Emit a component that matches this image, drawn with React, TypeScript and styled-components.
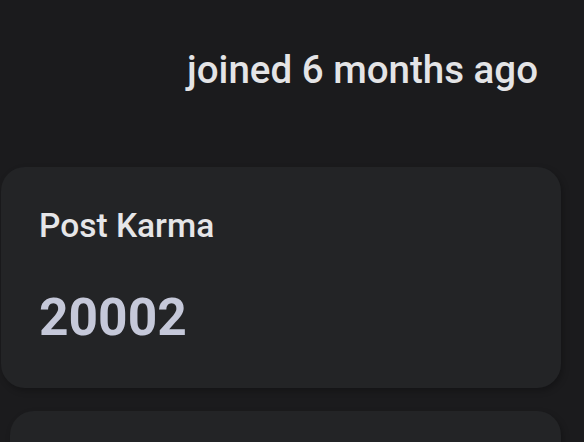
import styled, { createGlobalStyle } from 'styled-components';

const GlobalStyle = createGlobalStyle`
  html, body {
    margin: 0;
    padding: 0;
    background: #1b1b1d;
    font-family: Roboto, "Liberation Sans", sans-serif;
  }
`;

const Page = styled.div`
  width: 584px;
  height: 442px;
  overflow: hidden;
  display: flex;
  flex-direction: column;
  background: #1b1b1d;
`;

const JoinedRow = styled.div`
  display: flex;
  flex-shrink: 0;
  justify-content: flex-end;
  align-items: flex-start;
  padding: 46px 46px 0 0;
  height: 167px;
  box-sizing: border-box;
`;

const Joined = styled.span`
  color: #e4e4e6;
  font-size: 38.5px;
  font-weight: 500;
  line-height: 48px;
`;

const CardList = styled.div`
  display: flex;
  flex-direction: column;
  gap: 23px;
  padding-right: 23px;
`;

interface CardProps {
    readonly $offset: number;
}

const Card = styled.div<CardProps>`
  margin-left: ${props => props.$offset}px;
  height: 221px;
  flex-shrink: 0;
  box-sizing: border-box;
  padding: 39px 38px 0;
  background: #232426;
  border-radius: 24px;
  box-shadow: 2px 3px 6px rgba(0, 0, 0, 0.25);
`;

const CardTitle = styled.div`
  color: #e6e6e8;
  font-size: 33.5px;
  font-weight: 500;
  line-height: 40px;
`;

const CardValue = styled.div`
  margin-top: 42px;
  color: #c5c8d9;
  font-size: 51.5px;
  font-weight: 700;
  line-height: 60px;
`;

interface Stat {
    title: string;
    value: string;
}

const stats: Stat[] = [
    {title: 'Post Karma', value: '20002'},
    {title: 'Comment Karma', value: '1204'},
];

export default function App() {
    return (
        <>
            <GlobalStyle />
            <Page>
                <JoinedRow>
                    <Joined>joined 6 months ago</Joined>
                </JoinedRow>
                <CardList>
                    {stats.map((s, i) => (
                        <Card key={s.title} $offset={i === 0 ? 1 : 10}>
                            <CardTitle>{s.title}</CardTitle>
                            <CardValue>{s.value}</CardValue>
                        </Card>
                    ))}
                </CardList>
            </Page>
        </>
    );
}
